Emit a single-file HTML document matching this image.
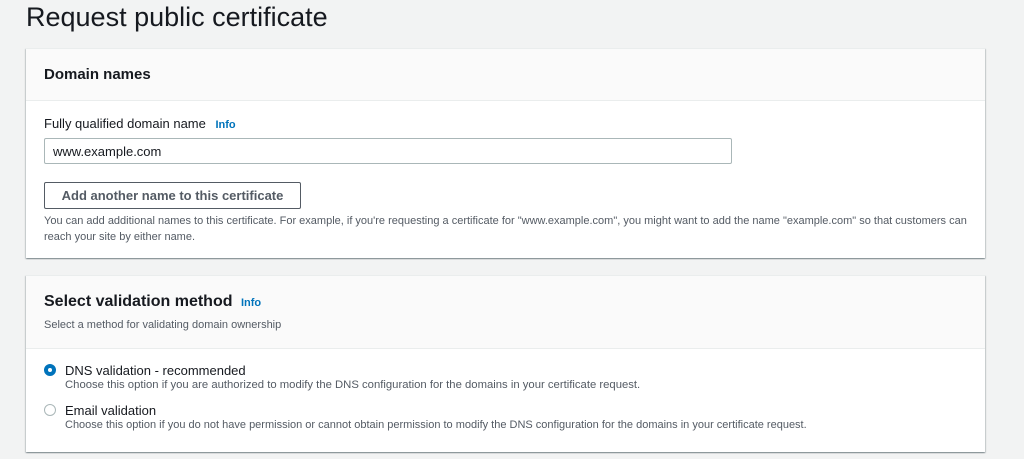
<!DOCTYPE html>
<html><head><style>
body{margin:0;width:1024px;height:459px;background:#f2f3f3;font-family:"Liberation Sans",sans-serif;color:#16191f;position:relative;overflow:hidden}
.a{position:absolute;white-space:nowrap}
.card{position:absolute;left:26px;width:959px;background:#fff;box-shadow:0 1px 1px 0 rgba(0,28,36,.3),1px 1px 1px 0 rgba(0,28,36,.15),-1px 1px 1px 0 rgba(0,28,36,.15);border-top:1px solid #eaeded}
.hd{background:#fafafa;border-bottom:1px solid #eaeded}
.info{color:#0073bb;font-weight:bold;font-size:11px}
.sm{font-size:11px;color:#545b64}
.radio{position:absolute;width:10px;height:10px;border-radius:50%;border:1px solid #aab7b8;background:#fff}
</style></head><body>
<div class="a" style="left:26px;top:2px;font-size:27px;color:#16191f">Request public certificate</div>
<div class="card" style="top:48px;height:209px">
 <div class="hd" style="height:51px"></div>
</div>
<div class="a" style="left:44px;top:66px;font-size:15px;font-weight:bold">Domain names</div>
<div class="a" style="left:44px;top:116px;font-size:13px">Fully qualified domain name <span class="info" style="margin-left:6px">Info</span></div>
<div class="a" style="left:44px;top:138px;width:686px;height:24px;border:1px solid #aab7b8;border-radius:2px;background:#fff"></div>
<div class="a" style="left:53px;top:144px;font-size:13px">www.example.com</div>
<div class="a" style="left:44px;top:182px;width:255px;height:25px;border:1px solid #545b64;border-radius:2px;background:#fff;text-align:center;line-height:25px;font-size:13px;font-weight:bold;color:#545b64">Add another name to this certificate</div>
<div class="a sm" style="left:44px;top:213px;line-height:16px">You can add additional names to this certificate. For example, if you're requesting a certificate for "www.example.com", you might want to add the name "example.com" so that customers can<br>reach your site by either name.</div>
<div class="card" style="top:275px;height:176px">
 <div class="hd" style="height:72px"></div>
</div>
<div class="a" style="left:44px;top:293px;font-size:16px;font-weight:bold">Select validation method <span class="info" style="margin-left:4px">Info</span></div>
<div class="a sm" style="left:44px;top:319px;font-size:11px">Select a method for validating domain ownership</div>
<div class="radio" style="left:44px;top:364px;border:4px solid #0073bb;width:4px;height:4px"></div>
<div class="a" style="left:65px;top:363px;font-size:13px">DNS validation - recommended</div>
<div class="a sm" style="left:65px;top:379px;font-size:11.3px">Choose this option if you are authorized to modify the DNS configuration for the domains in your certificate request.</div>
<div class="radio" style="left:44px;top:404px"></div>
<div class="a" style="left:65px;top:403px;font-size:13px">Email validation</div>
<div class="a sm" style="left:65px;top:419px;font-size:11px">Choose this option if you do not have permission or cannot obtain permission to modify the DNS configuration for the domains in your certificate request.</div>
</body></html>
